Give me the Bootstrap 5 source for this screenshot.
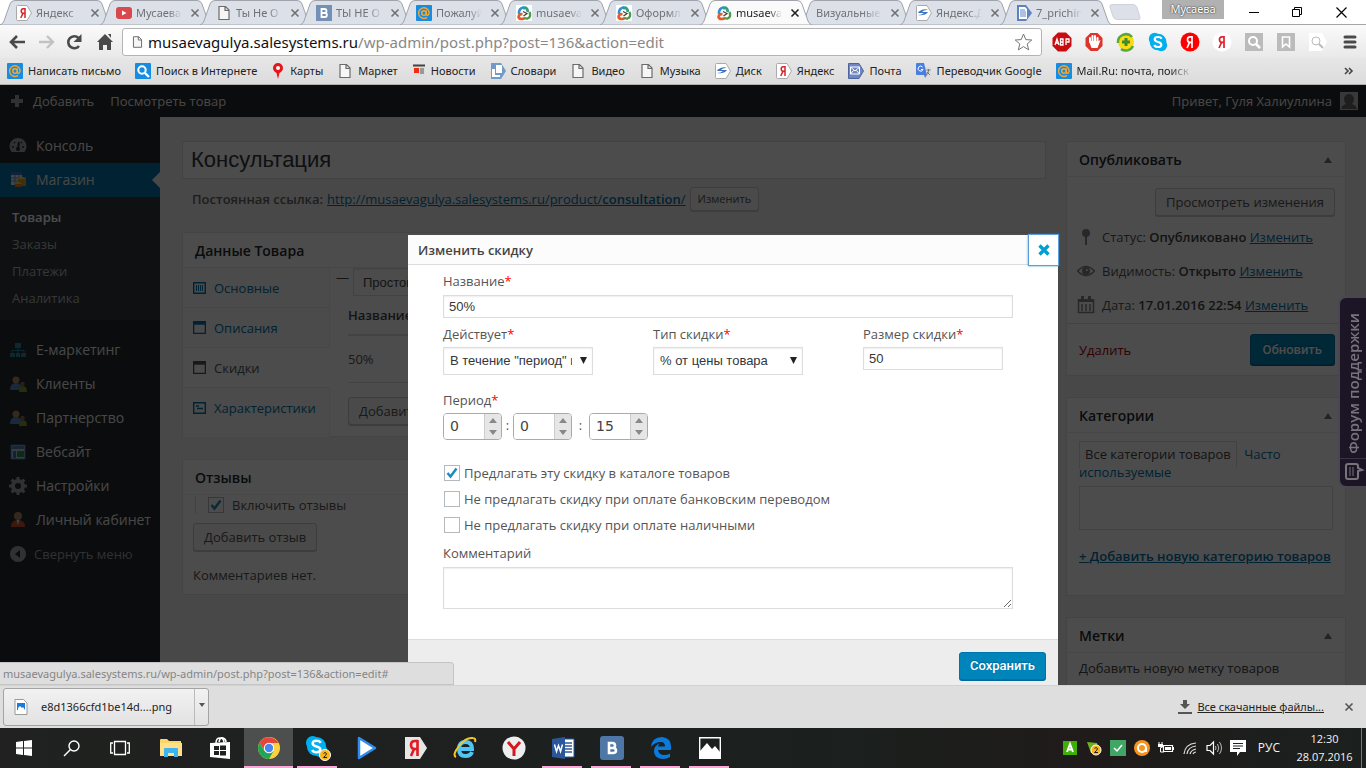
<!DOCTYPE html>
<html lang="ru">
<head>
<meta charset="utf-8">
<meta name="viewport" content="width=device-width, initial-scale=1">
<title>Изменить скидку</title>
<link href="https://cdn.jsdelivr.net/npm/bootstrap@5.3.0/dist/css/bootstrap.min.css" rel="stylesheet">
<style>
:root{--ui:"Open Sans","Noto Sans",sans-serif;--arial:"Liberation Sans",Arial,sans-serif;--blue:#0073aa}
body{font-family:var(--ui);font-size:13px;line-height:18px;color:#444;overflow:hidden}
button{font-family:inherit;padding:0;border:0;background:none;color:inherit}
svg{display:block;flex-shrink:0}
h1,h2{margin:0;font-size:14px;line-height:20px;font-weight:600;color:#23282d}
a{color:var(--blue)}
/* browser frame */
.chrome-ui{font-family:"Noto Sans",sans-serif;font-size:11px;color:#222}
.tabstrip{height:25px;background:#fff;border-bottom:1px solid #a5a5a5}
.btab{position:relative;width:112px;height:24px;margin-right:-12px;padding:2px 12px 0 16px;color:#6f7174;flex-shrink:0}
.btab .shape{position:absolute;left:0;top:0;width:112px;height:25px}
.btab .ttl{position:relative;width:46px;overflow:hidden;white-space:nowrap;margin:0 8px 0 4px;-webkit-mask-image:linear-gradient(90deg,#000 70%,transparent);mask-image:linear-gradient(90deg,#000 70%,transparent)}
.btab .wide{width:66px;margin-left:0}
.btab svg.ic,.btab button{position:relative}
.btab.cur{z-index:2;color:#222}
.newtab{width:34px;height:17px}
.who{width:62px;height:19px;background:#b1b1b1;color:#fff;font-size:11px;line-height:18px;text-shadow:0 0 2px #000}
.wbtn{width:46px;height:24px}
.toolbar{height:33px;background:linear-gradient(#fafafa,#e9e9e9)}
.omni{height:28px;background:#fff;border:1px solid #b4b4b4;border-radius:3px;font-family:"Noto Sans",sans-serif;font-size:15px;line-height:24px;color:#888}
.omni b{font-weight:400;color:#111}
.ext{width:32px}
.bmarks{height:27px;background:linear-gradient(#e6e6e6,#dcdcdc);border-bottom:1px solid #b0b0b0;white-space:nowrap;padding:0 12px 0 7px}
.bmarks a{color:#222;text-decoration:none;display:flex;align-items:center;gap:5px;margin-right:14px}
.fade-end{width:116px;overflow:hidden;-webkit-mask-image:linear-gradient(90deg,#000 80%,transparent);mask-image:linear-gradient(90deg,#000 80%,transparent)}
/* wordpress admin */
.adminbar{height:32px;background:#23282d;color:#eee}
.adminbar a{color:#eee;text-decoration:none}
.sidebar{width:160px;background:#23282d;padding-top:12px;flex-shrink:0}
.sidebar a{text-decoration:none;color:#eee}
.side-link{height:34px;display:flex;align-items:center;gap:9px;padding-left:9px;font-size:14px;position:relative;white-space:nowrap}
.side-link svg{width:18px;height:18px}
.side-link.fold{font-size:13px;gap:7px}
.sidebar .fold{color:#a0a5aa}
.side-cur{background:#0073aa}
.side-cur::after{content:"";position:absolute;right:0;top:9px;border:8px solid transparent;border-right-color:#f1f1f1;border-left:0}
.submenu{background:#32373c;padding:7px 12px 8px;margin-bottom:13px}
.submenu a{display:block;height:27px;line-height:27px;color:#b4b9be}
.submenu a.on{color:#fff;font-weight:600}
.work{background:#f1f1f1;padding:24px 20px 0 22px;gap:20px}
.title-in{height:38px;border:1px solid #ddd;border-radius:0;padding:0 8px;font:22px/36px var(--arial);color:#32373c;background:#fff;width:100%}
.permal{height:24px;margin:8px 0 21px;padding-left:10px}
.pbox{background:#fff;border:1px solid #e5e5e5}
.pbox>header{height:35px;border-bottom:1px solid #eee;padding:2px 12px 0;display:flex;align-items:center;justify-content:space-between}
.wbtn2{height:28px;border:1px solid #ccc;border-radius:3px;background:#f7f7f7;color:#555;padding:0 10px;box-shadow:0 1px 0 #ccc;white-space:nowrap}
.wbtn2.sm{height:24px;font-size:11px;padding:0 7px}
.prim{background:#0085ba;border:1px solid #0073aa;border-radius:3px;color:#fff;font:500 13px/26px Roboto,var(--arial);text-shadow:0 -1px 1px #006799;box-shadow:0 1px 0 #006799;padding:0 10px;height:28px}
.ptabs{width:147px;background:#fafafa;border-right:1px solid #eee;flex-shrink:0}
.ptabs a{height:40px;display:flex;align-items:center;gap:8px;padding-left:10px;text-decoration:none;border-bottom:1px solid #eee}
.ptabs a.on{background:#fff;color:#555;margin-right:-1px}
.ptabs a:last-child{height:49px;padding-bottom:10px;border:0}
.pdata{padding-left:6px}
.goods{height:205px}
.goods .kind{height:28px;width:180px;color:#444}
.sale{width:90%;line-height:38px;margin-left:12px}
.sale th{font-weight:600;border-bottom:2px solid #e1e1e1;padding:0}
.sale td{border-bottom:1px solid #e1e1e1;padding:0;color:#555;line-height:46px}
.addb{margin:14px 0 0 12px}
.reviews{margin-top:22px;height:136px}
.rev{border-left:1px solid #ddd;padding-left:12px;height:18px;margin:1px 0 9px 12px;color:#555}
.revb{margin-left:10px}
.revp{margin:15px 0 0 10px;color:#555}
.rcol{width:280px;flex-shrink:0}
.pubtop{padding:11px 10px 4px}
.pub-row{height:34px;display:flex;align-items:center;gap:7px;padding-left:10px;color:#555;white-space:nowrap}
.pub-row b{font-weight:600;color:#444}
.pubfoot{border-top:1px solid #ddd;height:52px;padding:0 10px 0 12px;margin-top:1px}
.upd{height:31px;padding:0 12px}
.cats{margin-top:21px;height:199px}
.catin{padding:12px 12px 0}
.cattab{border:1px solid #ddd;border-bottom:0;padding:3px 5px 5px}
.catbox{height:44px;border:1px solid #ddd;margin:5px 0 17px}
.tags{margin-top:21px;height:120px}
.tagp{padding:6px 12px}
.shade{position:absolute;inset:0;background:rgba(0,0,0,.7)}
.forum{position:absolute;right:0;top:211px;width:28px;height:192px;background:#1c1525;border:2px solid #4b464f;border-right:0;border-radius:8px 0 0 8px;color:#78747c}
.forum .lbl{writing-mode:vertical-rl;transform:rotate(180deg);font-size:15px;font-weight:600;line-height:24px;white-space:nowrap}
/* discount dialog */
.dlg{position:absolute;left:calc(50% - 275px);top:150px;bottom:0;width:650px;background:#fff;color:#555}
.dlg>header{height:30px;background:#fcfcfc;border-bottom:1px solid #ddd;padding-left:10px}
.dlg h2{font-size:13px;color:#444;line-height:18px}
.xbtn{width:31px;height:32px;border:1px solid #5b9dd9;box-shadow:0 0 2px rgba(30,140,190,.8);background:#fff;margin:-1px -1px 0 0}
.dlg main{padding:7px 45px 0 35px}
.dlg label{display:block}
.dlg label i{color:#f00;font-style:normal}
.fld{display:block;border:1px solid #ddd;border-radius:0;box-shadow:inset 0 1px 2px rgba(0,0,0,.07);background:#fff;color:#32373c;font:13px/18px var(--arial);height:23px;padding:0 5px;outline:0}
.selwrap{position:relative;width:150px}
.selwrap select{width:150px;height:28px;appearance:none;padding:0 20px 0 6px}
.selwrap svg{position:absolute;right:6px;top:10px;pointer-events:none}
.nm{margin:5px 0 7px}
.trio{gap:60px}
.trio label{margin-bottom:4px}
.sz{width:140px}
.per{margin:16px 0 4px}
.spins{margin-bottom:20px}
.spins .sep{width:11px;text-align:center;line-height:24px}
.spins .sep2{width:17px}
.spin{height:27px;border:1px solid #aaa;border-radius:4px;overflow:hidden;background:#fff}
.spin input{width:40px;border:0;outline:0;padding:0 0 0 6px;font:14px/25px "DejaVu Sans",sans-serif;color:#444;appearance:textfield;-moz-appearance:textfield}
.spin input::-webkit-inner-spin-button{appearance:none}
.spin div{width:17px;background:#e6e6e6;border-left:1px solid #ccc}
.spin button{height:12px;width:16px;display:grid;place-items:center}
.tick{appearance:none;width:16px;height:16px;border:1px solid #b4b9be;background:#fff;margin:0;flex-shrink:0}
.tick:checked{background:url("data:image/svg+xml,%3Csvg xmlns='http://www.w3.org/2000/svg' viewBox='0 0 14 14'%3E%3Cpath d='M2.5 7l3 3.500 6-8' fill='none' stroke='%231e8cbe' stroke-width='2.500'/%3E%3C/svg%3E")}
.dlg .chk{display:flex;align-items:center;gap:4px;height:26px;padding-left:1px}
.cml{margin:6px 0 5px}
.cm{height:42px}
.dlg footer{position:absolute;left:0;right:0;top:404px;bottom:0;background:#ededed;border-top:1px solid #ddd;padding:12px 12px 0}
/* lower bars */
.status{position:absolute;left:0;bottom:0;width:454px;height:23px;background:#dedede;border:1px solid #c4c4c4;border-left:0;border-top-right-radius:4px;color:#858585;padding-left:3px;line-height:21px}
.dlbar{height:43px;background:#dedede;border-top:1px solid #d2d2d2;padding:0 12px 0 3px}
.dl{height:38px;width:206px;border:1px solid #a3a3a3;border-radius:3px;background:linear-gradient(#f2f2f2,#e2e2e2);gap:11px;padding-left:8px}
.dlm{width:14px;display:grid;place-items:start center;padding-top:14px;border-left:1px solid #bbb}
.taskbar{height:40px;background:linear-gradient(90deg,#202120,#1b201e 60%,#1f1b1a 80%,#1b201f)}
.slot,.slot0{display:flex;align-items:center;justify-content:center;height:40px;width:48px;position:relative}
.slot{width:49px}
.slot0+.slot{margin-left:2px}
.run::after{content:"";position:absolute;left:4px;right:5px;bottom:0;height:2px;background:#f9a8d8}
.front{background:#4d4f4e}.front::after{left:0;right:0}
.tray{color:#f3f3f3;font-size:12px;line-height:18px;margin-right:4px}
.clock{width:74px;font-size:11px;border-right:1px solid #777;height:40px;padding-top:2px}
</style>
</head>
<body class="d-flex flex-column vh-100">
<svg width="0" height="0" class="position-absolute" aria-hidden="true"><defs>
<symbol id="doc" viewBox="0 0 16 16"><path d="M3 1.500h6.500L13 5v9.500H3zM9 1.500V5.500h4" fill="#f6f6f6" stroke="#6b6b6b" stroke-width="1.200"/></symbol>
<symbol id="mail" viewBox="0 0 16 16"><rect width="16" height="16" rx="1" fill="#168de2"/><circle cx="8" cy="8" r="2.300" fill="none" stroke="#f9a72b" stroke-width="1.500"/><path d="M10.300 5.500V9q.3 1.700 1.700 1.200 1.300-.8 1.100-3A5.300 5.300 0 1 0 11 12.400" fill="none" stroke="#f9a72b" stroke-width="1.400"/></symbol>
<symbol id="ya" viewBox="0 0 16 16"><path d="M1.500.5H11L15.500 8 11 15.500H1.500Q.5 15.500.5 14.500v-13Q.5.5 1.500.5z" fill="#fff" stroke="#aaa"/><path d="M9 3v10M9 3.700H7.200Q5.200 3.700 5.200 6t2 2.300H9M7 8.300L4.700 13" fill="none" stroke="#d8232c" stroke-width="1.500"/></symbol>
<symbol id="swirl" viewBox="0 0 16 16"><path d="M3 9Q2.500 3 8 2.200" fill="none" stroke="#2f8fd0" stroke-width="2.600"/><path d="M7 3.500Q11 1 12 7" fill="none" stroke="#2aa08c" stroke-width="2.800"/><path d="M13.500 7q2 5-2 6.500-2 .5-3.500-1" fill="none" stroke="#4a9b48" stroke-width="2.400"/><path d="M8.500 13.500q-5 1.500-6-1.500 0-3 4-3" fill="none" stroke="#e35b28" stroke-width="2.600"/><path d="M7 6.500l4 2-3.500 2.500" fill="none" stroke="#4b3b32" stroke-width="1.200"/></symbol>
<symbol id="disk" viewBox="0 0 16 16"><path d="M1.500.5H11L15.500 8 11 15.500H1.500Q.5 15.500.5 14.500v-13Q.5.5 1.500.5z" fill="#fff" stroke="#aaa"/><path d="M3 6.500Q8 3 12 5 8 4.500 6 7h6q-3 4-10 3 4 0 6-2H2z" fill="#3e74bd"/></symbol>
<symbol id="vk" viewBox="0 0 16 16"><rect width="16" height="16" fill="#7391b7"/><path d="M5.500 4h3q2 0 2 2t-2 2h-3zM5.500 8h3.400q2 0 2 2t-2 2H5.500z" fill="none" stroke="#fff" stroke-width="1.800"/></symbol>
<symbol id="x" viewBox="0 0 10 10"><path d="M1.500 1.500l7 7M8.500 1.500l-7 7" stroke="currentColor" stroke-width="1.600"/></symbol>
<symbol id="tabshape" viewBox="0 0 112 25"><path d="M0 25Q3 24 4 21L10 4Q11 .5 15 .5H97Q101 .5 102 4L108 21Q109 24 112 25z"/></symbol>
<symbol id="up" viewBox="0 0 10 8"><path d="M1 7l4-6 4 6z" fill="#72777c"/></symbol>
<symbol id="people" viewBox="0 0 18 18"><circle cx="7" cy="5" r="3.500" fill="#b08968"/><path d="M1 15q0-7 6-7t6 7z" fill="#5b86c4"/><circle cx="13.500" cy="9" r="2.300" fill="#8a6a50"/><path d="M10 17q0-6 4-6t4 6z" fill="#7e9c2e"/></symbol>
<symbol id="win" viewBox="0 0 14 14"><path d="M.7.7h12.600v12.600H.7z" fill="none" stroke="currentColor" stroke-width="1.400"/><path d="M1 1h12v3H1z" fill="currentColor"/></symbol>
<symbol id="skype" viewBox="0 0 24 24"><circle cx="8" cy="8" r="7" fill="#00aff0"/><circle cx="16" cy="16" r="7" fill="#00aff0"/><circle cx="12" cy="12" r="10" fill="#00aff0"/><path d="M16.500 8Q15 6 12 6 8 6 8 8.800 8 11 12 12t4 3.200Q16 18 12 18q-3.500 0-4.500-2.400" fill="none" stroke="#fff" stroke-width="2.600"/></symbol>
</defs></svg>

<div class="chrome-ui flex-shrink-0">
 <div class="tabstrip d-flex">
  <div class="btab d-flex align-items-center"><svg class="shape" fill="#dce0e8" stroke="#a0a4aa"><use href="#tabshape"/></svg><svg class="ic" width="16" height="16"><use href="#ya"/></svg><span class="ttl">Яндекс</span><button aria-label="Закрыть"><svg width="10" height="10"><use href="#x"/></svg></button></div>
  <div class="btab d-flex align-items-center"><svg class="shape" fill="#dce0e8" stroke="#a0a4aa"><use href="#tabshape"/></svg><svg class="ic" width="16" height="16" viewBox="0 0 16 16"><rect y="2" width="16" height="12" rx="3" fill="#d9484c"/><path d="M6 5.500v5l4.500-2.500z" fill="#fff"/></svg><span class="ttl">Мусаева</span><button aria-label="Закрыть"><svg width="10" height="10"><use href="#x"/></svg></button></div>
  <div class="btab d-flex align-items-center"><svg class="shape" fill="#dce0e8" stroke="#a0a4aa"><use href="#tabshape"/></svg><svg class="ic" width="16" height="16"><use href="#doc"/></svg><span class="ttl">Ты Не О</span><button aria-label="Закрыть"><svg width="10" height="10"><use href="#x"/></svg></button></div>
  <div class="btab d-flex align-items-center"><svg class="shape" fill="#dce0e8" stroke="#a0a4aa"><use href="#tabshape"/></svg><svg class="ic" width="16" height="16"><use href="#vk"/></svg><span class="ttl">ТЫ НЕ О</span><button aria-label="Закрыть"><svg width="10" height="10"><use href="#x"/></svg></button></div>
  <div class="btab d-flex align-items-center"><svg class="shape" fill="#dce0e8" stroke="#a0a4aa"><use href="#tabshape"/></svg><svg class="ic" width="16" height="16"><use href="#mail"/></svg><span class="ttl">Пожалуй</span><button aria-label="Закрыть"><svg width="10" height="10"><use href="#x"/></svg></button></div>
  <div class="btab d-flex align-items-center"><svg class="shape" fill="#dce0e8" stroke="#a0a4aa"><use href="#tabshape"/></svg><svg class="ic bg-white" width="16" height="16"><use href="#swirl"/></svg><span class="ttl">musaeva</span><button aria-label="Закрыть"><svg width="10" height="10"><use href="#x"/></svg></button></div>
  <div class="btab d-flex align-items-center"><svg class="shape" fill="#dce0e8" stroke="#a0a4aa"><use href="#tabshape"/></svg><svg class="ic bg-white" width="16" height="16"><use href="#swirl"/></svg><span class="ttl">Оформл</span><button aria-label="Закрыть"><svg width="10" height="10"><use href="#x"/></svg></button></div>
  <div class="btab cur d-flex align-items-center"><svg class="shape" fill="#fafafa" stroke="#a0a4aa"><use href="#tabshape"/></svg><svg class="ic" width="16" height="16"><use href="#swirl"/></svg><span class="ttl">musaeva</span><button aria-label="Закрыть"><svg width="10" height="10"><use href="#x"/></svg></button></div>
  <div class="btab d-flex align-items-center"><svg class="shape" fill="#dce0e8" stroke="#a0a4aa"><use href="#tabshape"/></svg><span class="ttl wide">Визуальные</span><button aria-label="Закрыть"><svg width="10" height="10"><use href="#x"/></svg></button></div>
  <div class="btab d-flex align-items-center"><svg class="shape" fill="#dce0e8" stroke="#a0a4aa"><use href="#tabshape"/></svg><svg class="ic" width="16" height="16"><use href="#disk"/></svg><span class="ttl">Яндекс.Д</span><button aria-label="Закрыть"><svg width="10" height="10"><use href="#x"/></svg></button></div>
  <div class="btab d-flex align-items-center"><svg class="shape" fill="#dce0e8" stroke="#a0a4aa"><use href="#tabshape"/></svg><svg class="ic" width="16" height="16" viewBox="0 0 16 16"><path d="M1 0h9l6 8-6 8H1z" fill="#5c82c0"/><path d="M3 2h6l2 2v10H3z" fill="#fff"/><path d="M4 5h5M4 7h6M4 9h6M4 11h6" stroke="#5c82c0"/></svg><span class="ttl">7_prichin</span><button aria-label="Закрыть"><svg width="10" height="10"><use href="#x"/></svg></button></div>
  <button class="newtab ms-2 mt-1" aria-label="Новая вкладка"><svg width="34" height="17" viewBox="0 0 34 17"><path d="M4 .5H25q3 0 4 3l3 10q.5 2-2 2H9q-3 0-4-3L2 3Q1.500.5 4 .5z" fill="#dce0e8" stroke="#cfd2d6"/></svg></button>
  <div class="who text-center ms-auto">Мусаева</div>
  <button class="wbtn" aria-label="Свернуть"><svg width="46" height="24"><path d="M25 12.500h10" stroke="#000"/></svg></button>
  <button class="wbtn" aria-label="Развернуть"><svg width="46" height="24"><path d="M22.500 9.500h7v7h-7zM24.500 9V7.500h7v7H30" fill="none" stroke="#000"/></svg></button>
  <button class="wbtn me-1" aria-label="Закрыть окно"><svg width="46" height="24"><path d="M20.500 7.500l10 10M30.500 7.500l-10 10" stroke="#000" stroke-width="1.200"/></svg></button>
 </div>
 <div class="toolbar d-flex align-items-center">
  <button class="ms-2" aria-label="Назад"><svg width="18" height="16" viewBox="0 0 18 16"><path d="M17 8H3M9 2L3 8l6 6" fill="none" stroke="#4a4a4a" stroke-width="2.600"/></svg></button>
  <button class="ms-2 me-2 ps-1" aria-label="Вперёд"><svg width="18" height="16" viewBox="0 0 18 16"><path d="M1 8h14M9 2l6 6-6 6" fill="none" stroke="#c2c2c2" stroke-width="2.400"/></svg></button>
  <button aria-label="Обновить страницу"><svg width="20" height="18" viewBox="-1 0 20 18"><path d="M14 13A6 6 0 1 1 13.500 5" fill="none" stroke="#4a4a4a" stroke-width="2.600"/><path d="M16.500 1v8h-8z" fill="#4a4a4a"/></svg></button>
  <button class="ms-2 ps-1 me-1" aria-label="Домой"><svg width="18" height="16" viewBox="0 0 18 16"><path d="M9 0l8 8h-2v8h-4v-5H7v5H3V8H1zM12 0h3v4z" fill="#4a4a4a"/></svg></button>
  <div class="omni flex-fill d-flex align-items-center px-2 ms-1"><svg class="me-1" width="13" height="18"><use href="#doc"/></svg><span><b>musaevagulya.salesystems.ru</b>/wp-admin/post.php?post=136&amp;action=edit</span><svg class="ms-auto" width="19" height="18" viewBox="0 0 19 18"><path d="M9.500 1l2.300 5.600 6 .4-4.600 3.900 1.500 6-5.200-3.300-5.200 3.300 1.500-6L1.200 7l6-.4z" fill="none" stroke="#777"/></svg></div>
  <div class="d-flex align-items-center ps-1">
   <svg class="ext" height="20" viewBox="0 0 32 20"><path d="M12 .5h8l5.500 5.500v8L20 19.500h-8L6.500 14V6z" fill="#c70d0f"/><path d="M9 13l2-6 2 6M10 11h2M14.500 7v6h2.500v-6zM14.500 10h2.500M20 13V7h3v3h-3" fill="none" stroke="#fff" stroke-width="1.300"/></svg>
   <svg class="ext" height="20" viewBox="0 0 32 20"><path d="M12.500 1h7l5 5v8l-5 5h-7l-5-5V6z" fill="#dc352d"/><path d="M12 10V6M14.500 9V4M17 9V4M19.500 10V6" stroke="#fff" stroke-width="2" stroke-linecap="round"/><path d="M11 9h9.500l2-1-3 8h-6z" fill="#fff"/></svg>
   <svg class="ext" height="20" viewBox="0 0 32 20"><circle cx="16" cy="10" r="8" fill="#fbdb14"/><path d="M8 11A8 8 0 0 1 22 5M23 14A8 8 0 0 1 11 17" fill="none" stroke="#58a83a" stroke-width="2.500"/><path d="M16 6v8M12 10h8" stroke="#3e8c2c" stroke-width="3"/></svg>
   <svg class="ext" height="20"><use href="#skype" x="6" width="20" height="20"/></svg>
   <svg class="ext" height="20" viewBox="0 0 32 20"><circle cx="16" cy="10" r="9.500" fill="#f00"/><path d="M18 4v12M18 4.800h-2q-2.500 0-2.500 2.800t2.500 2.800h2M15.500 10.500L13 16" fill="none" stroke="#fff" stroke-width="1.700"/></svg>
   <svg class="ext" height="20" viewBox="0 0 32 20"><circle cx="16" cy="10" r="9.500" fill="#fff"/><path d="M18 4v12M18 4.800h-2q-2.500 0-2.500 2.800t2.500 2.800h2M15.500 10.500L13 16" fill="none" stroke="#e0222c" stroke-width="1.700"/></svg>
   <svg class="ext" height="20" viewBox="0 0 32 20"><rect x="7" y="1" width="18" height="18" fill="#bbb"/><circle cx="15" cy="9" r="4" fill="none" stroke="#fff" stroke-width="2"/><path d="M18 12l4 4" stroke="#fff" stroke-width="2.500"/></svg>
   <svg class="ext" height="20" viewBox="0 0 32 20"><rect x="7" y="1" width="18" height="18" fill="#bbb"/><path d="M12.500 5h7v10L16 12l-3.500 3z" fill="none" stroke="#fff" stroke-width="1.600"/></svg>
   <svg class="ext" height="20" viewBox="0 0 32 20"><path d="M7 1h13l5 9-5 9H7z" fill="#fff"/><circle cx="14" cy="9" r="4" fill="none" stroke="#bbb"/><path d="M17 12l4 4" stroke="#bbb" stroke-width="2"/></svg>
   <svg class="ext" height="20" viewBox="0 0 32 20"><path d="M11 5h10M11 10h10M11 15h10" stroke="#4a4a4a" stroke-width="3" stroke-linecap="round"/></svg>
  </div>
 </div>
 <div class="bmarks d-flex align-items-center">
  <a href="#"><svg width="16" height="16"><use href="#mail"/></svg>Написать письмо</a>
  <a href="#"><svg width="16" height="16" viewBox="0 0 16 16"><rect width="16" height="16" rx="1" fill="#168de2"/><circle cx="7" cy="7" r="3.700" fill="none" stroke="#fff" stroke-width="2"/><path d="M10 10l4 4" stroke="#fff" stroke-width="2.400"/></svg>Поиск в Интернете</a>
  <a href="#"><svg width="14" height="16" viewBox="0 0 14 16"><path d="M7 0a5 5 0 0 1 5 5q0 3-3.500 5L7 16 5.500 10Q2 8 2 5a5 5 0 0 1 5-5z" fill="#e8141c"/><circle cx="7" cy="5" r="2" fill="#fff"/></svg>Карты</a>
  <a href="#"><svg width="16" height="16"><use href="#doc"/></svg>Маркет</a>
  <a href="#"><svg width="14" height="16" viewBox="0 0 14 16"><path d="M1 1h12v11L10 15 1 12z" fill="#ddd"/><path d="M2 5h5v5H2z" fill="#f22b12"/><path d="M1 2.500h12" stroke="#444" stroke-width="2"/><path d="M8 6h4M8 8h4M8 10h4" stroke="#555"/></svg>Новости</a>
  <a href="#"><svg width="16" height="16" viewBox="0 0 16 16"><path d="M1 0h10l5 8-5 8H1z" fill="#6f9ac9"/><path d="M6 2h6v8H6zM2 6v8h8v-2H5V6z" fill="#fff"/></svg>Словари</a>
  <a href="#"><svg width="16" height="16"><use href="#doc"/></svg>Видео</a>
  <a href="#"><svg width="16" height="16"><use href="#doc"/></svg>Музыка</a>
  <a href="#"><svg width="16" height="16"><use href="#disk"/></svg>Диск</a>
  <a href="#"><svg width="16" height="16"><use href="#ya"/></svg>Яндекс</a>
  <a href="#"><svg width="16" height="16" viewBox="0 0 16 16"><path d="M1 .5h10L15.500 8 11 15.500H.5V.5z" fill="#6f86c0" stroke="#4c64a0"/><path d="M2.500 4h9v7h-9zl4.500 4 4.500-4M2.500 11l3-3.500M11.500 11l-3-3.500" fill="none" stroke="#fff"/></svg>Почта</a>
  <a href="#"><svg width="16" height="16" viewBox="0 0 16 16"><path d="M6 4h9v11H9z" fill="#ddd"/><path d="M0 1q0-1 1-1h7l3 12H1q-1 0-1-1zM8 12l3 0-2 3z" fill="#4a7fe0"/><path d="M6.500 4A2.500 2.500 0 1 0 7 6.500H5" fill="none" stroke="#fff"/><path d="M10.500 7h4M12.500 6v1q0 4-2 5M11 9l3 3" fill="none" stroke="#777"/></svg>Переводчик Google</a>
  <a href="#"><svg width="16" height="16"><use href="#mail"/></svg><span class="fade-end">Mail.Ru: почта, поиск</span></a>
  <button class="ms-auto" aria-label="Другие закладки"><svg width="10" height="8" viewBox="0 0 10 8"><path d="M1 1l3 3-3 3M5 1l3 3-3 3" fill="none" stroke="#444" stroke-width="1.600"/></svg></button>
 </div>
</div>

<div class="flex-fill position-relative overflow-hidden d-flex flex-column">
 <div class="adminbar d-flex align-items-center px-2 flex-shrink-0">
  <svg class="me-2" width="17" height="16" viewBox="0 0 17 16"><path d="M9 2v12M3 8h12" stroke="#a0a5aa" stroke-width="4"/></svg>
  <a href="#" class="me-3">Добавить</a><a href="#">Посмотреть товар</a>
  <a href="#" class="ms-auto me-1 pe-1">Привет, Гуля Халиуллина</a>
  <svg width="18" height="18"><path d="M0 0h18v18H0z" fill="#c0c0c0"/><path d="M4 7a5 5 0 0 1 10 0q0 3-2 5 4 1 5 5H1q1-4 5-5-2-2-2-5z" fill="#666"/></svg>
 </div>
 <div class="d-flex flex-fill">
  <nav class="sidebar">
   <a class="side-link" href="#"><svg viewBox="0 0 18 18"><path d="M2.500 15A8.500 8.500 0 1 1 15.500 15z" fill="#a0a5aa"/><path d="M9 12l1-7" stroke="#23282d" stroke-width="2"/><circle cx="9" cy="12" r="2" fill="#23282d"/><path d="M3 10h2M13 10h2M5 5l1 1M13 5l-1 1" stroke="#23282d" stroke-width="1.500"/></svg>Консоль</a>
   <a class="side-link side-cur" href="#"><svg viewBox="0 0 18 18"><path d="M2 1h11v13H2z" fill="#dfe7f2"/><path d="M2 1h11v3H2z" fill="#3974c2"/><path d="M2 7h11M2 10h11M6 4v10M10 4v10" stroke="#6b8fc0"/><ellipse cx="13" cy="8" rx="4" ry="2" fill="#ffcf50"/><path d="M9 8h8v7H9z" fill="#e29a28"/><ellipse cx="9" cy="13" rx="3.500" ry="2" fill="#ffcf50"/><path d="M6 13h7v3H6z" fill="#d88b1c"/></svg>Магазин</a>
   <div class="submenu"><a href="#" class="on">Товары</a><a href="#">Заказы</a><a href="#">Платежи</a><a href="#">Аналитика</a></div>
   <a class="side-link" href="#"><svg viewBox="0 0 18 18"><path d="M6 2h6v5H6zM1 12h5v4H1zM7 12h4v4H7zM12 12h5v4h-5z" fill="#2389a5"/><path d="M9 7v5M3 12V9.500h12V12" fill="none" stroke="#2389a5"/></svg>Е-маркетинг</a>
   <a class="side-link" href="#"><svg><use href="#people"/></svg>Клиенты</a>
   <a class="side-link" href="#"><svg><use href="#people"/></svg>Партнерство</a>
   <a class="side-link" href="#"><svg viewBox="0 0 18 18"><path d="M2 2h14v14H2z" fill="#b7cbe0" stroke="#4679b0"/><path d="M3 3h12v3H3z" fill="#557fa8"/><path d="M4 8h3v7H4z" fill="#3e74ad"/><path d="M8 8h7v6H8z" fill="#2e8d4b"/></svg>Вебсайт</a>
   <a class="side-link" href="#"><svg viewBox="0 0 18 18"><circle cx="9" cy="9" r="5" fill="none" stroke="#a0a5aa" stroke-width="4"/><path d="M9 0v4M9 14v4M0 9h4M14 9h4M2.600 2.600l3 3M12.400 12.400l3 3M2.600 15.400l3-3M12.400 5.600l3-3" stroke="#a0a5aa" stroke-width="3"/></svg>Настройки</a>
   <a class="side-link" href="#"><svg viewBox="0 0 18 18"><circle cx="9" cy="5" r="4" fill="#b08968"/><path d="M2 16q0-7 7-7t7 7z" fill="#c9562a"/><path d="M7.500 9h3L9 14z" fill="#cfe0f5"/></svg>Личный кабинет</a>
   <a class="side-link fold" href="#"><svg viewBox="0 0 18 18"><circle cx="9" cy="9" r="8" fill="#a0a5aa"/><path d="M11 5v8L6 9z" fill="#23282d"/></svg>Свернуть меню</a>
  </nav>
  <div class="work flex-fill d-flex">
   <div class="flex-fill">
    <input class="title-in d-block" value="Консультация" aria-label="Название товара">
    <div class="d-flex align-items-center gap-1 permal"><b class="fw-semibold" style="color:#666">Постоянная ссылка:</b><a href="#">http://musaevagulya.salesystems.ru/product/<b class="fw-semibold">consultation</b>/</a><button class="wbtn2 sm">Изменить</button></div>
    <section class="pbox goods"><header><h2>Данные Товара</h2></header>
     <div class="d-flex">
      <div class="ptabs">
       <a href="#"><svg width="13" height="12" viewBox="0 0 13 12"><path d="M.7.700h11.600v10.600H.7z" fill="none" stroke="#0073aa" stroke-width="1.400"/><path d="M3.500 3v6M5.500 3v6M7.500 3v6M9.500 3v6" stroke="#0073aa"/></svg>Основные</a>
       <a href="#"><svg width="13" height="13"><use href="#win"/></svg>Описания</a>
       <a href="#" class="on"><svg width="13" height="13"><use href="#win"/></svg>Скидки</a>
       <a href="#"><svg width="13" height="12" viewBox="0 0 13 12"><path d="M.7.700h11.600v10.600H.7z" fill="none" stroke="#0073aa" stroke-width="1.400"/><path d="M3 4h3M4 6.500h6" stroke="#0073aa" stroke-width="1.600"/></svg>Характеристики</a>
      </div>
      <div class="flex-fill pdata">
       <div class="d-flex"><span class="me-1">—</span><select class="fld kind" aria-label="Тип товара"><option>Простой</option></select></div>
       <table class="sale"><thead><tr><th>Название</th></tr></thead><tbody><tr><td>50%</td></tr></tbody></table>
       <button class="wbtn2 addb">Добавить</button>
      </div>
     </div>
    </section>
    <section class="pbox reviews"><header><h2>Отзывы</h2></header>
     <label class="d-flex align-items-center gap-2 rev"><input type="checkbox" class="tick" checked>Включить отзывы</label>
     <button class="wbtn2 revb">Добавить отзыв</button>
     <p class="revp">Комментариев нет.</p>
    </section>
   </div>
   <aside class="rcol">
    <section class="pbox"><header><h2>Опубликовать</h2><svg width="10" height="8"><use href="#up"/></svg></header>
     <div class="text-end pubtop"><button class="wbtn2">Просмотреть изменения</button></div>
     <div class="pub-row"><svg width="18" height="18" viewBox="0 0 18 18"><circle cx="9" cy="5" r="4" fill="#82878c"/><path d="M9 8v9" stroke="#82878c" stroke-width="2"/></svg><span>Статус: <b>Опубликовано</b> <a href="#">Изменить</a></span></div>
     <div class="pub-row"><svg width="18" height="18" viewBox="0 0 18 18"><path d="M.5 9Q9 0 17.500 9 9 18 .5 9z" fill="none" stroke="#82878c" stroke-width="1.500"/><circle cx="9" cy="9" r="4" fill="#82878c"/><circle cx="10" cy="8" r="1" fill="#fff"/></svg><span>Видимость: <b>Открыто</b> <a href="#">Изменить</a></span></div>
     <div class="pub-row"><svg width="18" height="18" viewBox="0 0 18 18"><path d="M1.500 4h15v12.500h-15z" fill="none" stroke="#82878c" stroke-width="1.500"/><path d="M1 3h16v3H1zM4 0h3v4H4zM11 0h3v4h-3z" fill="#82878c"/><path d="M5 8v7M9 8v7M13 8v7" stroke="#82878c" stroke-width="1.500"/></svg><span>Дата: <b>17.01.2016 22:54</b> <a href="#">Изменить</a></span></div>
     <div class="d-flex align-items-center justify-content-between pubfoot"><a href="#" class="text-decoration-none" style="color:#a00">Удалить</a><button class="prim upd">Обновить</button></div>
    </section>
    <section class="pbox cats"><header><h2>Категории</h2><svg width="10" height="8"><use href="#up"/></svg></header>
     <div class="catin"><span class="cattab">Все категории товаров</span> <a href="#" class="text-decoration-none ms-1">Часто используемые</a>
     <div class="catbox"></div><a href="#" class="fw-semibold">+ Добавить новую категорию товаров</a></div>
    </section>
    <section class="pbox tags"><header><h2>Метки</h2><svg width="10" height="8"><use href="#up"/></svg></header><p class="tagp">Добавить новую метку товаров</p></section>
   </aside>
  </div>
 </div>
 <div class="shade"></div>
 <div class="forum d-flex flex-column align-items-center justify-content-end"><span class="lbl pt-1">Форум поддержки</span><svg width="26" height="28" viewBox="0 0 26 28"><path d="M0 .5h26" stroke="#3a3242"/><path d="M8 6h8q2 0 2 2v2l4 2-4 1v6q0 2-2 2H8q-2 0-2-2V8q0-2 2-2z" fill="none" stroke="#78747c" stroke-width="2"/><path d="M10 9v9M13 9v9" stroke="#78747c"/></svg></div>

 <div class="dlg" role="dialog" aria-labelledby="dt">
  <header class="d-flex align-items-center justify-content-between"><h2 id="dt">Изменить скидку</h2><button class="xbtn align-self-start d-flex align-items-center justify-content-center" aria-label="Закрыть"><svg width="12" height="12" viewBox="0 0 12 12"><path d="M1.500 1.500l9 9M10.500 1.500l-9 9" stroke="#00a0d2" stroke-width="3.400"/></svg></button></header>
  <main>
   <label for="nm">Название<i>*</i></label>
   <input id="nm" class="fld w-100 nm" value="50%">
   <div class="d-flex trio">
    <div><label for="s1">Действует<i>*</i></label><div class="selwrap"><select id="s1" class="fld"><option>В течение "период" п</option></select><svg width="7" height="7"><path d="M0 0h7L3.500 7z" fill="#222"/></svg></div></div>
    <div><label for="s2">Тип скидки<i>*</i></label><div class="selwrap"><select id="s2" class="fld"><option>% от цены товара</option></select><svg width="7" height="7"><path d="M0 0h7L3.500 7z" fill="#222"/></svg></div></div>
    <div><label for="sz">Размер скидки<i>*</i></label><input id="sz" class="fld sz" value="50"></div>
   </div>
   <label for="p1" class="per">Период<i>*</i></label>
   <div class="d-flex spins">
    <div class="spin d-flex"><input id="p1" type="number" value="0"><div><button aria-label="Дни больше"><svg width="8" height="5"><path d="M0 5l4-5 4 5z" fill="#888"/></svg></button><button aria-label="Дни меньше"><svg width="8" height="5"><path d="M0 0l4 5 4-5z" fill="#888"/></svg></button></div></div>
    <span class="sep">:</span>
    <div class="spin d-flex"><input type="number" value="0" aria-label="Часы"><div><button aria-label="Часы больше"><svg width="8" height="5"><path d="M0 5l4-5 4 5z" fill="#888"/></svg></button><button aria-label="Часы меньше"><svg width="8" height="5"><path d="M0 0l4 5 4-5z" fill="#888"/></svg></button></div></div>
    <span class="sep sep2">:</span>
    <div class="spin d-flex"><input type="number" value="15" aria-label="Минуты"><div><button aria-label="Минуты больше"><svg width="8" height="5"><path d="M0 5l4-5 4 5z" fill="#888"/></svg></button><button aria-label="Минуты меньше"><svg width="8" height="5"><path d="M0 0l4 5 4-5z" fill="#888"/></svg></button></div></div>
   </div>
   <label class="chk"><input type="checkbox" class="tick" checked>Предлагать эту скидку в каталоге товаров</label>
   <label class="chk"><input type="checkbox" class="tick">Не предлагать скидку при оплате банковским переводом</label>
   <label class="chk"><input type="checkbox" class="tick">Не предлагать скидку при оплате наличными</label>
   <label for="cm" class="cml">Комментарий</label>
   <textarea id="cm" class="fld w-100 cm"></textarea>
  </main>
  <footer class="text-end"><button class="prim">Сохранить</button></footer>
 </div>
 <div class="status chrome-ui">musaevagulya.salesystems.ru/wp-admin/post.php?post=136&amp;action=edit#</div>
</div>

<div class="dlbar chrome-ui d-flex align-items-center flex-shrink-0">
 <div class="dl d-flex align-items-center"><svg width="18" height="18" viewBox="0 0 18 18"><path d="M3 1.500h8.500L15 5v11.500H3z" fill="#fff" stroke="#999"/><path d="M5 5h8v7H5z" fill="#1a7bd8"/><path d="M6 10l2-2 2 2 1-1 2 3H6z" fill="#fff"/></svg><span class="flex-fill text-nowrap">e8d1366cfd1be14d....png</span><button class="h-100 dlm" aria-label="Меню загрузки"><svg width="6" height="4"><path d="M0 0h6L3 4z" fill="#555"/></svg></button></div>
 <svg class="ms-auto me-1" width="16" height="14" viewBox="0 0 16 14"><path d="M6 0h4v4h3L8 9 3 4h3zM1 12h14v2H1z" fill="#555"/></svg>
 <a href="#" style="color:#222">Все скачанные файлы...</a>
 <button class="ms-3 ps-1" aria-label="Скрыть панель"><svg width="10" height="10" color="#555"><use href="#x"/></svg></button>
</div>

<div class="taskbar d-flex align-items-center flex-shrink-0">
 <div class="slot0"><svg width="16" height="16"><path d="M0 2l7-1v6.500H0zM8 1l8-1v7.500H8zM0 8.500h7V15l-7-1zM8 8.500h8V16l-8-1z" fill="#fff"/></svg></div>
 <div class="slot0"><svg width="18" height="18"><circle cx="11" cy="7" r="5" fill="none" stroke="#fff" stroke-width="1.400"/><path d="M7.500 10.500L1 17" stroke="#fff" stroke-width="1.400"/></svg></div>
 <div class="slot0"><svg width="20" height="16"><path d="M4.500 1.500h11v13h-11zM3 3H.700v10H3M17 3h2.300v10H17" fill="none" stroke="#fff" stroke-width="1.300"/></svg></div>
 <div class="slot"><svg width="22" height="20"><path d="M0 2q0-1 1-1h6l2 2h12v15H0z" fill="#fbd667"/><path d="M0 5h22v13H0z" fill="#ffe08a"/><path d="M4 18v-7q0-1 1-1h12q1 0 1 1v8h-4v-4H8v4H4z" fill="#3fb3ee"/></svg></div>
 <div class="slot"><svg width="22" height="24"><path d="M1 7l20-1v17L1 21z" fill="#fff"/><path d="M7 7q0-5 4-5t4 5M10 6q1-5 4-4t3 4" fill="none" stroke="#fff" stroke-width="1.500"/><path d="M5 10h5v4H5zM11 9.500h6V14h-6zM5 15h5v4H5zM11 15h6v4.500h-6z" fill="#202120"/></svg></div>
 <div class="slot run front"><svg width="22" height="22" viewBox="0 0 22 22"><circle cx="11" cy="11" r="11" fill="#fdd23c"/><path d="M1.500 5.500A11 11 0 0 1 20.500 6H11L6.500 13.500z" fill="#e5453a"/><path d="M1.500 5.500A11 11 0 0 0 11 22l4.500-8h-9z" fill="#21a45c"/><circle cx="11" cy="11" r="5.200" fill="#fff"/><circle cx="11" cy="11" r="4.200" fill="#4587f3"/></svg></div>
 <div class="slot run"><svg width="26" height="26" viewBox="0 0 26 26"><use href="#skype" width="23" height="23"/><circle cx="20" cy="20" r="5.500" fill="#f9b417" stroke="#fff"/><path d="M18.500 18.500q1.500-2 3 0 0 1.500-3 4h3.500" fill="none" stroke="#222"/></svg></div>
 <div class="slot"><svg width="20" height="24"><path d="M2 2l16 10L2 22z" fill="#fff" stroke="#2e8def" stroke-width="2.500" stroke-linejoin="round"/></svg></div>
 <div class="slot"><svg width="24" height="24" viewBox="0 0 24 24"><path d="M1 1h15l7 11-7 11H1z" fill="#e6e6e6"/><path d="M13.500 4v16M14 5h-3Q7 5 7 9t4 4h3M10 13l-3 7" fill="none" stroke="#e01b22" stroke-width="2.600"/></svg></div>
 <div class="slot"><svg width="24" height="24" viewBox="0 0 24 24"><path d="M6 13h13q0-7-6.500-7T6 13t6.500 7q5 0 6.500-4" fill="none" stroke="#51c5f4" stroke-width="4"/><path d="M3 21Q-1 19 6 10T20 2q3 0 2 4" fill="none" stroke="#f3c62b" stroke-width="2"/></svg></div>
 <div class="slot"><svg width="24" height="24"><circle cx="12" cy="12" r="11.500" fill="#eee"/><path d="M6 6l6 7 6-7M12 12v8" fill="none" stroke="#d8161e" stroke-width="3"/></svg></div>
 <div class="slot run"><svg width="24" height="24"><path d="M11 3h12v18H11z" fill="#fff" stroke="#2b579a"/><path d="M14 7h7M14 10h7M14 13h7M14 16h7" stroke="#2b579a" stroke-width="1.500"/><path d="M1 3l13-2v22L1 21z" fill="#2b579a"/><path d="M3.500 8.500l2 7 2-6 2 6 2-7" fill="none" stroke="#fff" stroke-width="1.500"/></svg></div>
 <div class="slot run"><svg width="24" height="24"><rect width="24" height="24" rx="3" fill="#4e76a6"/><path d="M9 7h3.500q2.500 0 2.500 2.500T12.500 12H9zM9 12h4q3 0 3 2.500T13 17H9z" fill="none" stroke="#fff" stroke-width="2.600"/></svg></div>
 <div class="slot run"><svg width="22" height="22" viewBox="0 0 22 22"><path d="M1 10Q2 0 12 0q9 1 9 9v4H8q1 5 6 5 4 0 6-1.500V20q-3 2-7 2-8 0-9-7-.5-6 6-9-2 2-2 3.500h7Q15 5 11 5 5 5 1 10z" fill="#0a7bdc"/></svg></div>
 <div class="slot run"><svg width="22" height="22"><path d="M.7.700h20.600v20.600H.7z" fill="none" stroke="#fff" stroke-width="1.400"/><path d="M1 14l7-8 5 6 3-3 5 6v6H1z" fill="#fff"/></svg></div>
 <div class="tray ms-auto d-flex align-items-center gap-2">
  <svg width="16" height="16"><rect x="1" y="1" width="14" height="14" fill="#3fae06"/><path d="M5 12l3-8 3 8M6 9.500h4" fill="none" stroke="#fff" stroke-width="2"/></svg>
  <svg width="16" height="16"><path d="M1 2l10 1 2 9-8 1z" fill="#6db21d"/><circle cx="10" cy="10" r="5" fill="#f9b417" stroke="#fff"/><path d="M8.500 8.500q1.500-2 3 0 0 1.500-3 4H12" fill="none" stroke="#222"/></svg>
  <svg width="16" height="16"><path d="M0 0h16v16H0z" fill="#41a565"/><path d="M4 8l3 3 5-6" fill="none" stroke="#fff" stroke-width="1.500"/></svg>
  <svg width="16" height="16"><circle cx="8" cy="8" r="8" fill="#f7941d"/><circle cx="8" cy="8" r="4" fill="none" stroke="#fff" stroke-width="2"/><path d="M12 8v4" stroke="#fff" stroke-width="2"/></svg>
  <svg width="16" height="16"><path d="M5.500 5.500h9v6h-9zM15.500 7v3" fill="none" stroke="#fff" stroke-width="1.200"/><path d="M7 7h6v3H7zM0 4h5v3q-2 2-3 0H0z" fill="#fff"/><path d="M1 2v2M4 2v2M2.500 8v4H6" fill="none" stroke="#fff"/></svg>
  <svg width="16" height="16"><path d="M2 14Q3 4 14 3M5 14Q6 7 14 6M8 14q1-4 6-5M11 14q1-2 3-2" fill="none" stroke="#ddd" stroke-width="1.200"/></svg>
  <svg width="16" height="16"><path d="M1 5.500h3L7.500 2v12L4 10.500H1z" fill="none" stroke="#fff" stroke-width="1.200"/><path d="M9.500 6q1 2 0 4M11.500 4q2.500 4 0 8M13.500 2q4 6 0 12" fill="none" stroke="#bbb"/></svg>
  <svg width="16" height="16"><path d="M0 0h16v12H10l-3 4v-4H0z" fill="#fff"/><path d="M3 3.500h10M3 6h10M3 8.500h7" stroke="#222"/></svg>
  <span class="ms-1">РУС</span>
  <div class="text-center clock">12:30<br>28.07.2016</div>
 </div>
</div>
<script src="https://cdn.jsdelivr.net/npm/bootstrap@5.3.0/dist/js/bootstrap.bundle.min.js"></script>
</body>
</html>
